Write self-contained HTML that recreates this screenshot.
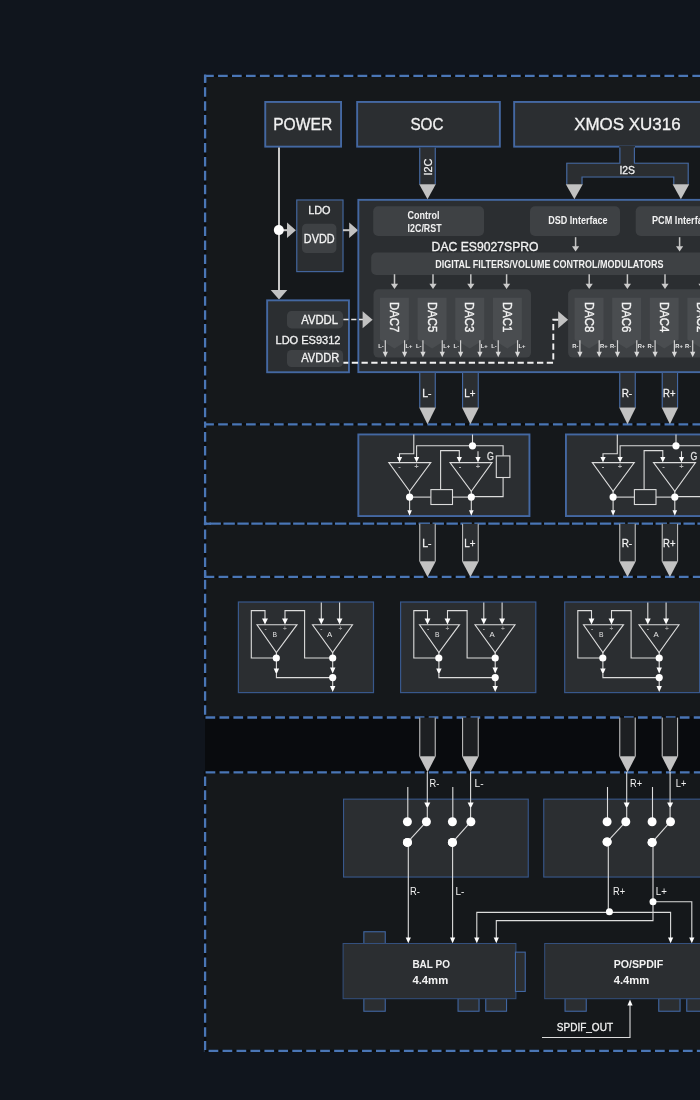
<!DOCTYPE html>
<html><head><meta charset="utf-8"><title>Block diagram</title>
<style>html,body{margin:0;padding:0;background:#10151d;}body{width:700px;height:1100px;overflow:hidden;}svg{display:block;will-change:transform;font-family:"Liberation Sans",sans-serif;}</style>
</head><body>
<svg width="700" height="1100" viewBox="0 0 700 1100">
<rect x="0" y="0" width="700" height="1100" fill="#10151d"/>
<rect x="205" y="75.5" width="495" height="976" fill="#15181b"/>
<rect x="205" y="717.5" width="495" height="55" fill="#090b0e"/>
<line x1="203.9" y1="75.9" x2="700" y2="75.9" stroke="#0b0d0f" stroke-width="2.4"/>
<line x1="203.9" y1="424.3" x2="700" y2="424.3" stroke="#0b0d0f" stroke-width="2.4"/>
<line x1="203.9" y1="523.7" x2="700" y2="523.7" stroke="#0b0d0f" stroke-width="2.4"/>
<line x1="203.9" y1="576.9" x2="700" y2="576.9" stroke="#0b0d0f" stroke-width="2.4"/>
<line x1="203.9" y1="717.5" x2="700" y2="717.5" stroke="#0b0d0f" stroke-width="2.4"/>
<line x1="203.9" y1="772.3" x2="700" y2="772.3" stroke="#0b0d0f" stroke-width="2.4"/>
<line x1="203.9" y1="1050.9" x2="700" y2="1050.9" stroke="#0b0d0f" stroke-width="2.4"/>
<line x1="205.1" y1="74.8" x2="205.1" y2="425.5" stroke="#0b0d0f" stroke-width="2.4"/>
<line x1="205.1" y1="424.3" x2="205.1" y2="578.1" stroke="#0b0d0f" stroke-width="2.4"/>
<line x1="205.1" y1="576.9" x2="205.1" y2="718.7" stroke="#0b0d0f" stroke-width="2.4"/>
<line x1="205.1" y1="772.3" x2="205.1" y2="1051.2" stroke="#0b0d0f" stroke-width="2.4"/>
<line x1="203.9" y1="75.9" x2="700" y2="75.9" stroke="#4a76b6" stroke-width="2.3" stroke-dasharray="9.7 4.25" stroke-dashoffset="13.75"/>
<line x1="203.9" y1="424.3" x2="700" y2="424.3" stroke="#4a76b6" stroke-width="2.3" stroke-dasharray="9.7 4.25" stroke-dashoffset="13.65"/>
<line x1="203.9" y1="523.7" x2="700" y2="523.7" stroke="#4a76b6" stroke-width="2.3" stroke-dasharray="11.4 2.54" stroke-dashoffset="8.35"/>
<line x1="203.9" y1="576.9" x2="700" y2="576.9" stroke="#4a76b6" stroke-width="2.3" stroke-dasharray="9.7 4.25" stroke-dashoffset="13.25"/>
<line x1="203.9" y1="717.5" x2="700" y2="717.5" stroke="#4a76b6" stroke-width="2.3" stroke-dasharray="9.7 4.25" stroke-dashoffset="12.35"/>
<line x1="203.9" y1="772.3" x2="700" y2="772.3" stroke="#4a76b6" stroke-width="2.3" stroke-dasharray="9.7 4.25" stroke-dashoffset="12.25"/>
<line x1="203.9" y1="1050.9" x2="700" y2="1050.9" stroke="#4a76b6" stroke-width="2.3" stroke-dasharray="9.7 4.25" stroke-dashoffset="9.25"/>
<line x1="205.1" y1="74.8" x2="205.1" y2="424.3" stroke="#4a76b6" stroke-width="2.3" stroke-dasharray="9.55 4.38" stroke-dashoffset="1.48"/>
<line x1="205.1" y1="424.3" x2="205.1" y2="576.9" stroke="#4a76b6" stroke-width="2.3" stroke-dasharray="9.55 4.38" stroke-dashoffset="6.13"/>
<line x1="205.1" y1="576.9" x2="205.1" y2="717.5" stroke="#4a76b6" stroke-width="2.3" stroke-dasharray="9.55 4.38" stroke-dashoffset="11.03"/>
<line x1="205.1" y1="772.3" x2="205.1" y2="1050" stroke="#4a76b6" stroke-width="2.3" stroke-dasharray="9.55 4.38" stroke-dashoffset="9.83"/>
<rect x="203.95" y="74.75" width="2.3" height="8" fill="#4a76b6"/>
<rect x="203.95" y="522.55" width="7" height="2.3" fill="#4a76b6"/>
<rect x="203.95" y="570" width="2.3" height="8" fill="#4a76b6"/>
<rect x="265.25" y="101.95" width="75.8" height="44.7" fill="#2b2e31" stroke="#4468a2" stroke-width="1.9"/>
<rect x="357.15" y="101.95" width="142.7" height="44.7" fill="#2b2e31" stroke="#4468a2" stroke-width="1.9"/>
<rect x="514.15" y="101.95" width="204.9" height="44.7" fill="#2b2e31" stroke="#4468a2" stroke-width="1.9"/>
<text x="302.7" y="129.6" font-size="16" text-anchor="middle" font-weight="normal" fill="#f2f2f2" textLength="59" lengthAdjust="spacingAndGlyphs" stroke="#f2f2f2" stroke-width="0.3">POWER</text>
<text x="426.9" y="129.6" font-size="16" text-anchor="middle" font-weight="normal" fill="#f2f2f2" textLength="33" lengthAdjust="spacingAndGlyphs" stroke="#f2f2f2" stroke-width="0.3">SOC</text>
<text x="627.4" y="129.6" font-size="16" text-anchor="middle" font-weight="normal" fill="#f2f2f2" textLength="106.5" lengthAdjust="spacingAndGlyphs" stroke="#f2f2f2" stroke-width="0.3">XMOS XU316</text>
<polyline points="279,147.6 279,291" fill="none" stroke="#c8c8c8" stroke-width="2"/>
<polygon points="270.7,290 287.3,290 279,299.6" fill="#c2c2c2"/>
<polyline points="279,230.2 288,230.2" fill="none" stroke="#c8c8c8" stroke-width="2"/>
<polygon points="287,222.4 287,238 295.9,230.2" fill="#c2c2c2"/>
<circle cx="278.8" cy="230.1" r="5" fill="#ffffff"/>
<rect x="296.77" y="199.97" width="46.25" height="71.65" fill="#2b2e31" stroke="#4468a2" stroke-width="1.15"/>
<text x="319.4" y="213.9" font-size="11.5" text-anchor="middle" font-weight="normal" fill="#f2f2f2" textLength="22.5" lengthAdjust="spacingAndGlyphs" stroke="#f2f2f2" stroke-width="0.3">LDO</text>
<rect x="302" y="223.7" width="34.4" height="29.3" fill="#3e4144" rx="4.5"/>
<text x="319.2" y="243.3" font-size="12" text-anchor="middle" font-weight="normal" fill="#f2f2f2" textLength="30.8" lengthAdjust="spacingAndGlyphs" stroke="#f2f2f2" stroke-width="0.3">DVDD</text>
<polyline points="343,230.2 350,230.2" fill="none" stroke="#c8c8c8" stroke-width="2"/>
<polygon points="349.2,222.4 349.2,238 358.1,230.2" fill="#c2c2c2"/>
<rect x="358.35" y="199.85" width="360.7" height="172.3" fill="#2b2e31" stroke="#4468a2" stroke-width="1.9"/>
<rect x="419.2" y="147.6" width="16.6" height="36.7" fill="#2b2e31"/>
<polyline points="419.75,147.6 419.75,184.3" fill="none" stroke="#4468a2" stroke-width="1.15"/>
<polyline points="435.25,147.6 435.25,184.3" fill="none" stroke="#4468a2" stroke-width="1.15"/>
<polygon points="419.2,184.3 435.8,184.3 427.5,199.2" fill="#c2c2c2"/>
<text transform="translate(432,175.6) rotate(-90)" font-size="11" fill="#f2f2f2" stroke="#f2f2f2" stroke-width="0.25" textLength="17" lengthAdjust="spacingAndGlyphs">I2C</text>
<path d="M619.3,146.1 V162.6 H566.2 V184.3 H582.6 V177.6 H673.2 V184.3 H688.8 V162.6 H635 V146.1 Z" fill="#2b2e31"/>
<path d="M619.9,147.6 V163.2 H566.8 V184.3 M582,184.3 V177 H673.8 V184.3 M688.2,184.3 V163.2 H634.4 V147.6" fill="none" stroke="#4468a2" stroke-width="1.15"/>
<polygon points="565.8,184.3 582.8,184.3 574.4,199.2" fill="#c2c2c2"/>
<polygon points="672.6,184.3 689.2,184.3 680.9,199.2" fill="#c2c2c2"/>
<text x="627.2" y="173.8" font-size="11.5" text-anchor="middle" font-weight="normal" fill="#f2f2f2" textLength="15.6" lengthAdjust="spacingAndGlyphs" stroke="#f2f2f2" stroke-width="0.3">I2S</text>
<rect x="373.2" y="206.3" width="110.8" height="29.7" fill="#3e4144" rx="5"/>
<rect x="530" y="206.3" width="90" height="29.7" fill="#3e4144" rx="5"/>
<rect x="635.7" y="206.3" width="84.3" height="29.7" fill="#3e4144" rx="5"/>
<text x="423.6" y="218.7" font-size="10.5" text-anchor="middle" font-weight="bold" fill="#f2f2f2" textLength="32" lengthAdjust="spacingAndGlyphs">Control</text>
<text x="424.6" y="232.3" font-size="10.5" text-anchor="middle" font-weight="bold" fill="#f2f2f2" textLength="34" lengthAdjust="spacingAndGlyphs">I2C/RST</text>
<text x="577.9" y="223.9" font-size="10.5" text-anchor="middle" font-weight="bold" fill="#f2f2f2" textLength="59.3" lengthAdjust="spacingAndGlyphs">DSD Interface</text>
<text x="652" y="223.9" font-size="10.5" text-anchor="start" font-weight="bold" fill="#f2f2f2" textLength="61" lengthAdjust="spacingAndGlyphs">PCM Interface</text>
<text x="431.6" y="250.5" font-size="12.6" text-anchor="start" font-weight="normal" fill="#f2f2f2" textLength="107" lengthAdjust="spacingAndGlyphs" stroke="#f2f2f2" stroke-width="0.3">DAC ES9027SPRO</text>
<rect x="371.2" y="252.5" width="348.8" height="22.5" fill="#3e4144" rx="5"/>
<text x="435.2" y="268.2" font-size="10.3" text-anchor="start" font-weight="bold" fill="#f2f2f2" textLength="228.3" lengthAdjust="spacingAndGlyphs">DIGITAL FILTERS/VOLUME CONTROL/MODULATORS</text>
<polyline points="575.6,237.2 575.6,246.8" fill="none" stroke="#c4c4c4" stroke-width="1.5"/>
<polygon points="572,246.3 579.2,246.3 575.6,251.5" fill="#cacaca"/>
<polyline points="679.6,237.2 679.6,246.8" fill="none" stroke="#c4c4c4" stroke-width="1.5"/>
<polygon points="676,246.3 683.2,246.3 679.6,251.5" fill="#cacaca"/>
<rect x="373.5" y="289.3" width="157.5" height="68.3" fill="#3e4144" rx="5"/>
<rect x="568.1" y="289.3" width="151.9" height="68.3" fill="#3e4144" rx="5"/>
<polyline points="394.5,274.2 394.5,284.3" fill="none" stroke="#c4c4c4" stroke-width="1.5"/>
<polygon points="390.9,283.8 398.1,283.8 394.5,289" fill="#cacaca"/>
<polygon points="380,297.7 408.9,297.7 408.9,339.4 394.45,348.5 380,339.4" fill="#4a4d50"/>
<text transform="translate(390.05,302) rotate(90)" font-size="13" fill="#f2f2f2" stroke="#f2f2f2" stroke-width="0.4" textLength="30.4" lengthAdjust="spacingAndGlyphs">DAC7</text>
<polyline points="385.3,340.2 385.3,352.3" fill="none" stroke="#d0d0d0" stroke-width="1.2"/>
<polygon points="382.7,351.8 387.9,351.8 385.3,357.2" fill="#d8d8d8"/>
<polyline points="404.6,340.2 404.6,352.3" fill="none" stroke="#d0d0d0" stroke-width="1.2"/>
<polygon points="402,351.8 407.2,351.8 404.6,357.2" fill="#d8d8d8"/>
<text x="383.8" y="348.2" font-size="5.8" text-anchor="end" font-weight="bold" fill="#e8e8e8">L-</text>
<text x="405.5" y="348.2" font-size="5.8" text-anchor="start" font-weight="bold" fill="#e8e8e8">L+</text>
<polyline points="433,274.2 433,284.3" fill="none" stroke="#c4c4c4" stroke-width="1.5"/>
<polygon points="429.4,283.8 436.6,283.8 433,289" fill="#cacaca"/>
<polygon points="417.65,297.7 446.55,297.7 446.55,339.4 432.1,348.5 417.65,339.4" fill="#4a4d50"/>
<text transform="translate(427.7,302) rotate(90)" font-size="13" fill="#f2f2f2" stroke="#f2f2f2" stroke-width="0.4" textLength="30.4" lengthAdjust="spacingAndGlyphs">DAC5</text>
<polyline points="422.95,340.2 422.95,352.3" fill="none" stroke="#d0d0d0" stroke-width="1.2"/>
<polygon points="420.35,351.8 425.55,351.8 422.95,357.2" fill="#d8d8d8"/>
<polyline points="442.25,340.2 442.25,352.3" fill="none" stroke="#d0d0d0" stroke-width="1.2"/>
<polygon points="439.65,351.8 444.85,351.8 442.25,357.2" fill="#d8d8d8"/>
<text x="421.45" y="348.2" font-size="5.8" text-anchor="end" font-weight="bold" fill="#e8e8e8">L-</text>
<text x="443.15" y="348.2" font-size="5.8" text-anchor="start" font-weight="bold" fill="#e8e8e8">L+</text>
<polyline points="470.8,274.2 470.8,284.3" fill="none" stroke="#c4c4c4" stroke-width="1.5"/>
<polygon points="467.2,283.8 474.4,283.8 470.8,289" fill="#cacaca"/>
<polygon points="455.3,297.7 484.2,297.7 484.2,339.4 469.75,348.5 455.3,339.4" fill="#4a4d50"/>
<text transform="translate(465.35,302) rotate(90)" font-size="13" fill="#f2f2f2" stroke="#f2f2f2" stroke-width="0.4" textLength="30.4" lengthAdjust="spacingAndGlyphs">DAC3</text>
<polyline points="460.6,340.2 460.6,352.3" fill="none" stroke="#d0d0d0" stroke-width="1.2"/>
<polygon points="458,351.8 463.2,351.8 460.6,357.2" fill="#d8d8d8"/>
<polyline points="479.9,340.2 479.9,352.3" fill="none" stroke="#d0d0d0" stroke-width="1.2"/>
<polygon points="477.3,351.8 482.5,351.8 479.9,357.2" fill="#d8d8d8"/>
<text x="459.1" y="348.2" font-size="5.8" text-anchor="end" font-weight="bold" fill="#e8e8e8">L-</text>
<text x="480.8" y="348.2" font-size="5.8" text-anchor="start" font-weight="bold" fill="#e8e8e8">L+</text>
<polyline points="506.6,274.2 506.6,284.3" fill="none" stroke="#c4c4c4" stroke-width="1.5"/>
<polygon points="503,283.8 510.2,283.8 506.6,289" fill="#cacaca"/>
<polygon points="492.95,297.7 521.85,297.7 521.85,339.4 507.4,348.5 492.95,339.4" fill="#4a4d50"/>
<text transform="translate(503,302) rotate(90)" font-size="13" fill="#f2f2f2" stroke="#f2f2f2" stroke-width="0.4" textLength="30.4" lengthAdjust="spacingAndGlyphs">DAC1</text>
<polyline points="498.25,340.2 498.25,352.3" fill="none" stroke="#d0d0d0" stroke-width="1.2"/>
<polygon points="495.65,351.8 500.85,351.8 498.25,357.2" fill="#d8d8d8"/>
<polyline points="517.55,340.2 517.55,352.3" fill="none" stroke="#d0d0d0" stroke-width="1.2"/>
<polygon points="514.95,351.8 520.15,351.8 517.55,357.2" fill="#d8d8d8"/>
<text x="496.75" y="348.2" font-size="5.8" text-anchor="end" font-weight="bold" fill="#e8e8e8">L-</text>
<text x="518.45" y="348.2" font-size="5.8" text-anchor="start" font-weight="bold" fill="#e8e8e8">L+</text>
<polyline points="589.2,274.2 589.2,284.3" fill="none" stroke="#c4c4c4" stroke-width="1.5"/>
<polygon points="585.6,283.8 592.8,283.8 589.2,289" fill="#cacaca"/>
<polygon points="574.6,297.7 603.5,297.7 603.5,339.4 589.05,348.5 574.6,339.4" fill="#4a4d50"/>
<text transform="translate(584.65,302) rotate(90)" font-size="13" fill="#f2f2f2" stroke="#f2f2f2" stroke-width="0.4" textLength="30.4" lengthAdjust="spacingAndGlyphs">DAC8</text>
<polyline points="579.9,340.2 579.9,352.3" fill="none" stroke="#d0d0d0" stroke-width="1.2"/>
<polygon points="577.3,351.8 582.5,351.8 579.9,357.2" fill="#d8d8d8"/>
<polyline points="599.2,340.2 599.2,352.3" fill="none" stroke="#d0d0d0" stroke-width="1.2"/>
<polygon points="596.6,351.8 601.8,351.8 599.2,357.2" fill="#d8d8d8"/>
<text x="578.4" y="348.2" font-size="5.8" text-anchor="end" font-weight="bold" fill="#e8e8e8">R-</text>
<text x="600.1" y="348.2" font-size="5.8" text-anchor="start" font-weight="bold" fill="#e8e8e8">R+</text>
<polyline points="627.4,274.2 627.4,284.3" fill="none" stroke="#c4c4c4" stroke-width="1.5"/>
<polygon points="623.8,283.8 631,283.8 627.4,289" fill="#cacaca"/>
<polygon points="612.2,297.7 641.1,297.7 641.1,339.4 626.65,348.5 612.2,339.4" fill="#4a4d50"/>
<text transform="translate(622.25,302) rotate(90)" font-size="13" fill="#f2f2f2" stroke="#f2f2f2" stroke-width="0.4" textLength="30.4" lengthAdjust="spacingAndGlyphs">DAC6</text>
<polyline points="617.5,340.2 617.5,352.3" fill="none" stroke="#d0d0d0" stroke-width="1.2"/>
<polygon points="614.9,351.8 620.1,351.8 617.5,357.2" fill="#d8d8d8"/>
<polyline points="636.8,340.2 636.8,352.3" fill="none" stroke="#d0d0d0" stroke-width="1.2"/>
<polygon points="634.2,351.8 639.4,351.8 636.8,357.2" fill="#d8d8d8"/>
<text x="616" y="348.2" font-size="5.8" text-anchor="end" font-weight="bold" fill="#e8e8e8">R-</text>
<text x="637.7" y="348.2" font-size="5.8" text-anchor="start" font-weight="bold" fill="#e8e8e8">R+</text>
<polyline points="665,274.2 665,284.3" fill="none" stroke="#c4c4c4" stroke-width="1.5"/>
<polygon points="661.4,283.8 668.6,283.8 665,289" fill="#cacaca"/>
<polygon points="649.8,297.7 678.7,297.7 678.7,339.4 664.25,348.5 649.8,339.4" fill="#4a4d50"/>
<text transform="translate(659.85,302) rotate(90)" font-size="13" fill="#f2f2f2" stroke="#f2f2f2" stroke-width="0.4" textLength="30.4" lengthAdjust="spacingAndGlyphs">DAC4</text>
<polyline points="655.1,340.2 655.1,352.3" fill="none" stroke="#d0d0d0" stroke-width="1.2"/>
<polygon points="652.5,351.8 657.7,351.8 655.1,357.2" fill="#d8d8d8"/>
<polyline points="674.4,340.2 674.4,352.3" fill="none" stroke="#d0d0d0" stroke-width="1.2"/>
<polygon points="671.8,351.8 677,351.8 674.4,357.2" fill="#d8d8d8"/>
<text x="653.6" y="348.2" font-size="5.8" text-anchor="end" font-weight="bold" fill="#e8e8e8">R-</text>
<text x="675.3" y="348.2" font-size="5.8" text-anchor="start" font-weight="bold" fill="#e8e8e8">R+</text>
<polyline points="702,274.2 702,284.3" fill="none" stroke="#c4c4c4" stroke-width="1.5"/>
<polygon points="698.4,283.8 705.6,283.8 702,289" fill="#cacaca"/>
<polygon points="687.4,297.7 716.3,297.7 716.3,339.4 701.85,348.5 687.4,339.4" fill="#4a4d50"/>
<text transform="translate(697.45,302) rotate(90)" font-size="13" fill="#f2f2f2" stroke="#f2f2f2" stroke-width="0.4" textLength="30.4" lengthAdjust="spacingAndGlyphs">DAC2</text>
<polyline points="692.7,340.2 692.7,352.3" fill="none" stroke="#d0d0d0" stroke-width="1.2"/>
<polygon points="690.1,351.8 695.3,351.8 692.7,357.2" fill="#d8d8d8"/>
<polyline points="712,340.2 712,352.3" fill="none" stroke="#d0d0d0" stroke-width="1.2"/>
<polygon points="709.4,351.8 714.6,351.8 712,357.2" fill="#d8d8d8"/>
<text x="691.2" y="348.2" font-size="5.8" text-anchor="end" font-weight="bold" fill="#e8e8e8">R-</text>
<text x="712.9" y="348.2" font-size="5.8" text-anchor="start" font-weight="bold" fill="#e8e8e8">R+</text>
<rect x="267.15" y="300.35" width="81.8" height="71.9" fill="#2b2e31" stroke="#4468a2" stroke-width="1.9"/>
<rect x="287" y="311.1" width="56.1" height="17.3" fill="#3e4144" rx="4.5"/>
<rect x="287" y="349.9" width="56.1" height="17.2" fill="#3e4144" rx="4.5"/>
<text x="301.2" y="323.9" font-size="12" text-anchor="start" font-weight="normal" fill="#f2f2f2" textLength="36.8" lengthAdjust="spacingAndGlyphs" stroke="#f2f2f2" stroke-width="0.3">AVDDL</text>
<text x="301.2" y="362.2" font-size="12" text-anchor="start" font-weight="normal" fill="#f2f2f2" textLength="38" lengthAdjust="spacingAndGlyphs" stroke="#f2f2f2" stroke-width="0.3">AVDDR</text>
<text x="275.5" y="343.9" font-size="11.3" text-anchor="start" font-weight="normal" fill="#f2f2f2" textLength="65" lengthAdjust="spacingAndGlyphs" stroke="#f2f2f2" stroke-width="0.3">LDO ES9312</text>
<polyline points="343.4,319.6 363,319.6" fill="none" stroke="#e6e6e6" stroke-width="1.5" stroke-dasharray="5.2 2.6"/>
<polygon points="362.6,311.2 362.6,328.3 372.6,319.8" fill="#c2c2c2"/>
<polyline points="343.4,362.8 553.3,362.8 553.3,319.8 558.6,319.8" fill="none" stroke="#f0f0f0" stroke-width="1.9" stroke-dasharray="6.3 3.45" stroke-dashoffset="1.4"/>
<polygon points="558.2,311.3 558.2,328.3 568.1,319.8" fill="#c2c2c2"/>
<rect x="419.2" y="372.9" width="16.6" height="34.7" fill="#2b2e31"/>
<polyline points="419.75,372.9 419.75,407.6" fill="none" stroke="#4468a2" stroke-width="1.15"/>
<polyline points="435.25,372.9 435.25,407.6" fill="none" stroke="#4468a2" stroke-width="1.15"/>
<polygon points="419.2,407.6 435.8,407.6 427.5,424.3" fill="#c2c2c2"/>
<text x="426.9" y="396.7" font-size="11.5" text-anchor="middle" font-weight="normal" fill="#f2f2f2" textLength="9.3" lengthAdjust="spacingAndGlyphs" stroke="#f2f2f2" stroke-width="0.3">L-</text>
<rect x="419.2" y="523.8" width="16.6" height="37.5" fill="#2b2e31"/>
<polyline points="419.75,523.8 419.75,561.3" fill="none" stroke="#b4b4b4" stroke-width="1.15"/>
<polyline points="435.25,523.8 435.25,561.3" fill="none" stroke="#b4b4b4" stroke-width="1.15"/>
<polygon points="419.2,561.3 435.8,561.3 427.5,577.1" fill="#c2c2c2"/>
<text x="426.9" y="546.5" font-size="11.5" text-anchor="middle" font-weight="normal" fill="#f2f2f2" textLength="9.3" lengthAdjust="spacingAndGlyphs" stroke="#f2f2f2" stroke-width="0.3">L-</text>
<rect x="419.2" y="717.6" width="16.6" height="38.7" fill="#1d1f22"/>
<polyline points="419.75,717.6 419.75,756.3" fill="none" stroke="#b4b4b4" stroke-width="1.15"/>
<polyline points="435.25,717.6 435.25,756.3" fill="none" stroke="#b4b4b4" stroke-width="1.15"/>
<polygon points="419.2,756.3 435.8,756.3 427.5,772.2" fill="#c2c2c2"/>
<rect x="462" y="372.9" width="16.8" height="34.7" fill="#2b2e31"/>
<polyline points="462.55,372.9 462.55,407.6" fill="none" stroke="#4468a2" stroke-width="1.15"/>
<polyline points="478.25,372.9 478.25,407.6" fill="none" stroke="#4468a2" stroke-width="1.15"/>
<polygon points="462,407.6 478.8,407.6 470.4,424.3" fill="#c2c2c2"/>
<text x="469.8" y="396.7" font-size="11.5" text-anchor="middle" font-weight="normal" fill="#f2f2f2" textLength="11.2" lengthAdjust="spacingAndGlyphs" stroke="#f2f2f2" stroke-width="0.3">L+</text>
<rect x="462" y="523.8" width="16.8" height="37.5" fill="#2b2e31"/>
<polyline points="462.55,523.8 462.55,561.3" fill="none" stroke="#b4b4b4" stroke-width="1.15"/>
<polyline points="478.25,523.8 478.25,561.3" fill="none" stroke="#b4b4b4" stroke-width="1.15"/>
<polygon points="462,561.3 478.8,561.3 470.4,577.1" fill="#c2c2c2"/>
<text x="469.8" y="546.5" font-size="11.5" text-anchor="middle" font-weight="normal" fill="#f2f2f2" textLength="11.2" lengthAdjust="spacingAndGlyphs" stroke="#f2f2f2" stroke-width="0.3">L+</text>
<rect x="462" y="717.6" width="16.8" height="38.7" fill="#1d1f22"/>
<polyline points="462.55,717.6 462.55,756.3" fill="none" stroke="#b4b4b4" stroke-width="1.15"/>
<polyline points="478.25,717.6 478.25,756.3" fill="none" stroke="#b4b4b4" stroke-width="1.15"/>
<polygon points="462,756.3 478.8,756.3 470.4,772.2" fill="#c2c2c2"/>
<rect x="619.2" y="372.9" width="16.6" height="34.7" fill="#2b2e31"/>
<polyline points="619.75,372.9 619.75,407.6" fill="none" stroke="#4468a2" stroke-width="1.15"/>
<polyline points="635.25,372.9 635.25,407.6" fill="none" stroke="#4468a2" stroke-width="1.15"/>
<polygon points="619.2,407.6 635.8,407.6 627.5,424.3" fill="#c2c2c2"/>
<text x="626.9" y="396.7" font-size="11.5" text-anchor="middle" font-weight="normal" fill="#f2f2f2" textLength="10.5" lengthAdjust="spacingAndGlyphs" stroke="#f2f2f2" stroke-width="0.3">R-</text>
<rect x="619.2" y="523.8" width="16.6" height="37.5" fill="#2b2e31"/>
<polyline points="619.75,523.8 619.75,561.3" fill="none" stroke="#b4b4b4" stroke-width="1.15"/>
<polyline points="635.25,523.8 635.25,561.3" fill="none" stroke="#b4b4b4" stroke-width="1.15"/>
<polygon points="619.2,561.3 635.8,561.3 627.5,577.1" fill="#c2c2c2"/>
<text x="626.9" y="546.5" font-size="11.5" text-anchor="middle" font-weight="normal" fill="#f2f2f2" textLength="10.5" lengthAdjust="spacingAndGlyphs" stroke="#f2f2f2" stroke-width="0.3">R-</text>
<rect x="619.2" y="717.6" width="16.6" height="38.7" fill="#1d1f22"/>
<polyline points="619.75,717.6 619.75,756.3" fill="none" stroke="#b4b4b4" stroke-width="1.15"/>
<polyline points="635.25,717.6 635.25,756.3" fill="none" stroke="#b4b4b4" stroke-width="1.15"/>
<polygon points="619.2,756.3 635.8,756.3 627.5,772.2" fill="#c2c2c2"/>
<rect x="661.7" y="372.9" width="16.4" height="34.7" fill="#2b2e31"/>
<polyline points="662.25,372.9 662.25,407.6" fill="none" stroke="#4468a2" stroke-width="1.15"/>
<polyline points="677.55,372.9 677.55,407.6" fill="none" stroke="#4468a2" stroke-width="1.15"/>
<polygon points="661.7,407.6 678.1,407.6 669.9,424.3" fill="#c2c2c2"/>
<text x="669.3" y="396.7" font-size="11.5" text-anchor="middle" font-weight="normal" fill="#f2f2f2" textLength="12.4" lengthAdjust="spacingAndGlyphs" stroke="#f2f2f2" stroke-width="0.3">R+</text>
<rect x="661.7" y="523.8" width="16.4" height="37.5" fill="#2b2e31"/>
<polyline points="662.25,523.8 662.25,561.3" fill="none" stroke="#b4b4b4" stroke-width="1.15"/>
<polyline points="677.55,523.8 677.55,561.3" fill="none" stroke="#b4b4b4" stroke-width="1.15"/>
<polygon points="661.7,561.3 678.1,561.3 669.9,577.1" fill="#c2c2c2"/>
<text x="669.3" y="546.5" font-size="11.5" text-anchor="middle" font-weight="normal" fill="#f2f2f2" textLength="12.4" lengthAdjust="spacingAndGlyphs" stroke="#f2f2f2" stroke-width="0.3">R+</text>
<rect x="661.7" y="717.6" width="16.4" height="38.7" fill="#1d1f22"/>
<polyline points="662.25,717.6 662.25,756.3" fill="none" stroke="#b4b4b4" stroke-width="1.15"/>
<polyline points="677.55,717.6 677.55,756.3" fill="none" stroke="#b4b4b4" stroke-width="1.15"/>
<polygon points="661.7,756.3 678.1,756.3 669.9,772.2" fill="#c2c2c2"/>
<rect x="358.35" y="434.45" width="171.1" height="81.6" fill="#2b2e31" stroke="#4468a2" stroke-width="1.9"/>
<rect x="565.95" y="434.45" width="153.1" height="81.6" fill="#2b2e31" stroke="#4468a2" stroke-width="1.9"/>
<polyline points="413.8,434.5 413.8,453.8 399.5,453.8 399.5,458" fill="none" stroke="#dcdcdc" stroke-width="1.1"/>
<polygon points="396.9,457 402.1,457 399.5,462.5" fill="#ffffff"/>
<polyline points="472.5,434.5 472.5,445.8" fill="none" stroke="#dcdcdc" stroke-width="1.1"/>
<polyline points="472.5,445.8 416.6,445.8 416.6,458" fill="none" stroke="#dcdcdc" stroke-width="1.1"/>
<polygon points="414,457 419.2,457 416.6,462.5" fill="#ffffff"/>
<polyline points="472.5,445.8 503.1,445.8 503.1,455.8" fill="none" stroke="#dcdcdc" stroke-width="1.1"/>
<polyline points="503.1,477.5 503.1,496.6 471.3,496.6" fill="none" stroke="#dcdcdc" stroke-width="1.1"/>
<rect x="496.3" y="455.9" width="13.6" height="21.6" fill="#2b2e31" stroke="#dcdcdc" stroke-width="1.1"/>
<polygon points="388.8,462.6 430.8,462.6 409.6,491.3" fill="none" stroke="#dcdcdc" stroke-width="1.1" stroke-linejoin="miter"/>
<polygon points="450,462.6 492,462.6 471.3,491.3" fill="none" stroke="#dcdcdc" stroke-width="1.1" stroke-linejoin="miter"/>
<polyline points="440.6,489.5 440.6,450.6 459.3,450.6 459.3,458" fill="none" stroke="#dcdcdc" stroke-width="1.1"/>
<polygon points="456.7,457 461.9,457 459.3,462.5" fill="#ffffff"/>
<polyline points="478,451.3 478,458" fill="none" stroke="#dcdcdc" stroke-width="1.1"/>
<polygon points="475.4,457 480.6,457 478,462.5" fill="#ffffff"/>
<polyline points="409.6,491 409.6,497" fill="none" stroke="#dcdcdc" stroke-width="1.1"/>
<polyline points="471.3,491 471.3,497" fill="none" stroke="#dcdcdc" stroke-width="1.1"/>
<polyline points="409.6,497.1 430.8,497.1" fill="none" stroke="#dcdcdc" stroke-width="1.1"/>
<polyline points="452.5,497.1 471.3,497.1" fill="none" stroke="#dcdcdc" stroke-width="1.1"/>
<rect x="430.9" y="489.6" width="21.6" height="14.9" fill="#2b2e31" stroke="#dcdcdc" stroke-width="1.1"/>
<polyline points="409.6,497 409.6,510.8" fill="none" stroke="#dcdcdc" stroke-width="1.1"/>
<polygon points="407.3,510.3 411.9,510.3 409.6,515.7" fill="#ffffff"/>
<polyline points="471.3,497 471.3,510.8" fill="none" stroke="#dcdcdc" stroke-width="1.1"/>
<polygon points="469,510.3 473.6,510.3 471.3,515.7" fill="#ffffff"/>
<circle cx="472.5" cy="445.8" r="3.6" fill="#ffffff"/>
<circle cx="409.6" cy="497.1" r="3.6" fill="#ffffff"/>
<circle cx="471.3" cy="497.1" r="3.6" fill="#ffffff"/>
<text x="487" y="459.6" font-size="10.5" text-anchor="start" font-weight="normal" fill="#e0e0e0" textLength="6.8" lengthAdjust="spacingAndGlyphs" stroke="#e0e0e0" stroke-width="0.3">G</text>
<text x="399.5" y="469" font-size="7.6" text-anchor="middle" font-weight="bold" fill="#b4b4b4">-</text>
<text x="416.4" y="469" font-size="7.6" text-anchor="middle" font-weight="bold" fill="#b4b4b4">+</text>
<text x="460" y="469" font-size="7.6" text-anchor="middle" font-weight="bold" fill="#b4b4b4">-</text>
<text x="478" y="469" font-size="7.6" text-anchor="middle" font-weight="bold" fill="#b4b4b4">+</text>
<polyline points="617.3,434.5 617.3,453.8 603,453.8 603,458" fill="none" stroke="#dcdcdc" stroke-width="1.1"/>
<polygon points="600.4,457 605.6,457 603,462.5" fill="#ffffff"/>
<polyline points="676,434.5 676,445.8" fill="none" stroke="#dcdcdc" stroke-width="1.1"/>
<polyline points="676,445.8 620.1,445.8 620.1,458" fill="none" stroke="#dcdcdc" stroke-width="1.1"/>
<polygon points="617.5,457 622.7,457 620.1,462.5" fill="#ffffff"/>
<polyline points="676,445.8 706.6,445.8 706.6,455.8" fill="none" stroke="#dcdcdc" stroke-width="1.1"/>
<polyline points="706.6,477.5 706.6,496.6 674.8,496.6" fill="none" stroke="#dcdcdc" stroke-width="1.1"/>
<polygon points="592.3,462.6 634.3,462.6 613.1,491.3" fill="none" stroke="#dcdcdc" stroke-width="1.1" stroke-linejoin="miter"/>
<polygon points="653.5,462.6 695.5,462.6 674.8,491.3" fill="none" stroke="#dcdcdc" stroke-width="1.1" stroke-linejoin="miter"/>
<polyline points="644.1,489.5 644.1,450.6 662.8,450.6 662.8,458" fill="none" stroke="#dcdcdc" stroke-width="1.1"/>
<polygon points="660.2,457 665.4,457 662.8,462.5" fill="#ffffff"/>
<polyline points="681.5,451.3 681.5,458" fill="none" stroke="#dcdcdc" stroke-width="1.1"/>
<polygon points="678.9,457 684.1,457 681.5,462.5" fill="#ffffff"/>
<polyline points="613.1,491 613.1,497" fill="none" stroke="#dcdcdc" stroke-width="1.1"/>
<polyline points="674.8,491 674.8,497" fill="none" stroke="#dcdcdc" stroke-width="1.1"/>
<polyline points="613.1,497.1 634.3,497.1" fill="none" stroke="#dcdcdc" stroke-width="1.1"/>
<polyline points="656,497.1 674.8,497.1" fill="none" stroke="#dcdcdc" stroke-width="1.1"/>
<rect x="634.4" y="489.6" width="21.6" height="14.9" fill="#2b2e31" stroke="#dcdcdc" stroke-width="1.1"/>
<polyline points="613.1,497 613.1,510.8" fill="none" stroke="#dcdcdc" stroke-width="1.1"/>
<polygon points="610.8,510.3 615.4,510.3 613.1,515.7" fill="#ffffff"/>
<polyline points="674.8,497 674.8,510.8" fill="none" stroke="#dcdcdc" stroke-width="1.1"/>
<polygon points="672.5,510.3 677.1,510.3 674.8,515.7" fill="#ffffff"/>
<circle cx="676" cy="445.8" r="3.6" fill="#ffffff"/>
<circle cx="613.1" cy="497.1" r="3.6" fill="#ffffff"/>
<circle cx="674.8" cy="497.1" r="3.6" fill="#ffffff"/>
<text x="690.5" y="459.6" font-size="10.5" text-anchor="start" font-weight="normal" fill="#e0e0e0" textLength="6.8" lengthAdjust="spacingAndGlyphs" stroke="#e0e0e0" stroke-width="0.3">G</text>
<text x="603" y="469" font-size="7.6" text-anchor="middle" font-weight="bold" fill="#b4b4b4">-</text>
<text x="619.9" y="469" font-size="7.6" text-anchor="middle" font-weight="bold" fill="#b4b4b4">+</text>
<text x="663.5" y="469" font-size="7.6" text-anchor="middle" font-weight="bold" fill="#b4b4b4">-</text>
<text x="681.5" y="469" font-size="7.6" text-anchor="middle" font-weight="bold" fill="#b4b4b4">+</text>
<rect x="238.4" y="602" width="135.1" height="90.6" fill="#2b2e31" stroke="#38588c" stroke-width="1.2"/>
<polyline points="276.3,658 251.3,658 251.3,610.6 265,610.6 265,620" fill="none" stroke="#dcdcdc" stroke-width="1.1"/>
<polygon points="262.1,618.4 267.9,618.4 265,624.6" fill="#ffffff"/>
<polyline points="332.7,658 304.6,658 304.6,610.6 285,610.6 285,620" fill="none" stroke="#dcdcdc" stroke-width="1.1"/>
<polygon points="282.1,618.4 287.9,618.4 285,624.6" fill="#ffffff"/>
<polyline points="321.3,602.4 321.3,618.9" fill="none" stroke="#dcdcdc" stroke-width="1.1"/>
<polygon points="318.4,618.4 324.2,618.4 321.3,624.6" fill="#ffffff"/>
<polyline points="339.6,602.4 339.6,618.9" fill="none" stroke="#dcdcdc" stroke-width="1.1"/>
<polygon points="336.7,618.4 342.5,618.4 339.6,624.6" fill="#ffffff"/>
<polygon points="257,624.7 297,624.7 276.4,652.6" fill="none" stroke="#dcdcdc" stroke-width="1.1" stroke-linejoin="miter"/>
<polygon points="312.5,624.7 352.5,624.7 332.6,652.6" fill="none" stroke="#dcdcdc" stroke-width="1.1" stroke-linejoin="miter"/>
<polyline points="276.4,652 276.4,658" fill="none" stroke="#dcdcdc" stroke-width="1.1"/>
<polyline points="332.7,652 332.7,658" fill="none" stroke="#dcdcdc" stroke-width="1.1"/>
<polyline points="276.4,658 276.4,668.9" fill="none" stroke="#dcdcdc" stroke-width="1.1"/>
<polygon points="273.7,668.4 279.1,668.4 276.4,674.4" fill="#ffffff"/>
<polyline points="276.4,674 276.4,677.6 332.7,677.6" fill="none" stroke="#dcdcdc" stroke-width="1.1"/>
<polyline points="332.7,658 332.7,668.1" fill="none" stroke="#dcdcdc" stroke-width="1.1"/>
<polygon points="330,667.6 335.4,667.6 332.7,673.6" fill="#ffffff"/>
<polyline points="332.7,677.5 332.7,686.5" fill="none" stroke="#dcdcdc" stroke-width="1.1"/>
<polygon points="330,686 335.4,686 332.7,692" fill="#ffffff"/>
<circle cx="276.3" cy="658" r="3.6" fill="#ffffff"/>
<circle cx="332.7" cy="658" r="3.6" fill="#ffffff"/>
<circle cx="332.7" cy="677.6" r="3.6" fill="#ffffff"/>
<text x="274.8" y="637.1" font-size="8" text-anchor="middle" font-weight="normal" fill="#e4e4e4" textLength="4.5" lengthAdjust="spacingAndGlyphs">B</text>
<text x="329.7" y="637.1" font-size="8" text-anchor="middle" font-weight="normal" fill="#e4e4e4" textLength="5.2" lengthAdjust="spacingAndGlyphs">A</text>
<text x="265.5" y="630.9" font-size="6.5" text-anchor="middle" font-weight="bold" fill="#9a9a9a">-</text>
<text x="285" y="630.9" font-size="6.5" text-anchor="middle" font-weight="bold" fill="#9a9a9a">+</text>
<text x="321.3" y="630.9" font-size="6.5" text-anchor="middle" font-weight="bold" fill="#9a9a9a">-</text>
<text x="340.5" y="630.9" font-size="6.5" text-anchor="middle" font-weight="bold" fill="#9a9a9a">+</text>
<rect x="400.6" y="602" width="135.2" height="90.6" fill="#2b2e31" stroke="#38588c" stroke-width="1.2"/>
<polyline points="438.8,658 413.8,658 413.8,610.6 427.5,610.6 427.5,620" fill="none" stroke="#dcdcdc" stroke-width="1.1"/>
<polygon points="424.6,618.4 430.4,618.4 427.5,624.6" fill="#ffffff"/>
<polyline points="495.2,658 467.1,658 467.1,610.6 447.5,610.6 447.5,620" fill="none" stroke="#dcdcdc" stroke-width="1.1"/>
<polygon points="444.6,618.4 450.4,618.4 447.5,624.6" fill="#ffffff"/>
<polyline points="483.8,602.4 483.8,618.9" fill="none" stroke="#dcdcdc" stroke-width="1.1"/>
<polygon points="480.9,618.4 486.7,618.4 483.8,624.6" fill="#ffffff"/>
<polyline points="502.1,602.4 502.1,618.9" fill="none" stroke="#dcdcdc" stroke-width="1.1"/>
<polygon points="499.2,618.4 505,618.4 502.1,624.6" fill="#ffffff"/>
<polygon points="419.5,624.7 459.5,624.7 438.9,652.6" fill="none" stroke="#dcdcdc" stroke-width="1.1" stroke-linejoin="miter"/>
<polygon points="475,624.7 515,624.7 495.1,652.6" fill="none" stroke="#dcdcdc" stroke-width="1.1" stroke-linejoin="miter"/>
<polyline points="438.9,652 438.9,658" fill="none" stroke="#dcdcdc" stroke-width="1.1"/>
<polyline points="495.2,652 495.2,658" fill="none" stroke="#dcdcdc" stroke-width="1.1"/>
<polyline points="438.9,658 438.9,668.9" fill="none" stroke="#dcdcdc" stroke-width="1.1"/>
<polygon points="436.2,668.4 441.6,668.4 438.9,674.4" fill="#ffffff"/>
<polyline points="438.9,674 438.9,677.6 495.2,677.6" fill="none" stroke="#dcdcdc" stroke-width="1.1"/>
<polyline points="495.2,658 495.2,668.1" fill="none" stroke="#dcdcdc" stroke-width="1.1"/>
<polygon points="492.5,667.6 497.9,667.6 495.2,673.6" fill="#ffffff"/>
<polyline points="495.2,677.5 495.2,686.5" fill="none" stroke="#dcdcdc" stroke-width="1.1"/>
<polygon points="492.5,686 497.9,686 495.2,692" fill="#ffffff"/>
<circle cx="438.8" cy="658" r="3.6" fill="#ffffff"/>
<circle cx="495.2" cy="658" r="3.6" fill="#ffffff"/>
<circle cx="495.2" cy="677.6" r="3.6" fill="#ffffff"/>
<text x="437.3" y="637.1" font-size="8" text-anchor="middle" font-weight="normal" fill="#e4e4e4" textLength="4.5" lengthAdjust="spacingAndGlyphs">B</text>
<text x="492.2" y="637.1" font-size="8" text-anchor="middle" font-weight="normal" fill="#e4e4e4" textLength="5.2" lengthAdjust="spacingAndGlyphs">A</text>
<text x="428" y="630.9" font-size="6.5" text-anchor="middle" font-weight="bold" fill="#9a9a9a">-</text>
<text x="447.5" y="630.9" font-size="6.5" text-anchor="middle" font-weight="bold" fill="#9a9a9a">+</text>
<text x="483.8" y="630.9" font-size="6.5" text-anchor="middle" font-weight="bold" fill="#9a9a9a">-</text>
<text x="503" y="630.9" font-size="6.5" text-anchor="middle" font-weight="bold" fill="#9a9a9a">+</text>
<rect x="564.7" y="602" width="134.9" height="90.6" fill="#2b2e31" stroke="#38588c" stroke-width="1.2"/>
<polyline points="602.8,658 577.8,658 577.8,610.6 591.5,610.6 591.5,620" fill="none" stroke="#dcdcdc" stroke-width="1.1"/>
<polygon points="588.6,618.4 594.4,618.4 591.5,624.6" fill="#ffffff"/>
<polyline points="659.2,658 631.1,658 631.1,610.6 611.5,610.6 611.5,620" fill="none" stroke="#dcdcdc" stroke-width="1.1"/>
<polygon points="608.6,618.4 614.4,618.4 611.5,624.6" fill="#ffffff"/>
<polyline points="647.8,602.4 647.8,618.9" fill="none" stroke="#dcdcdc" stroke-width="1.1"/>
<polygon points="644.9,618.4 650.7,618.4 647.8,624.6" fill="#ffffff"/>
<polyline points="666.1,602.4 666.1,618.9" fill="none" stroke="#dcdcdc" stroke-width="1.1"/>
<polygon points="663.2,618.4 669,618.4 666.1,624.6" fill="#ffffff"/>
<polygon points="583.5,624.7 623.5,624.7 602.9,652.6" fill="none" stroke="#dcdcdc" stroke-width="1.1" stroke-linejoin="miter"/>
<polygon points="639,624.7 679,624.7 659.1,652.6" fill="none" stroke="#dcdcdc" stroke-width="1.1" stroke-linejoin="miter"/>
<polyline points="602.9,652 602.9,658" fill="none" stroke="#dcdcdc" stroke-width="1.1"/>
<polyline points="659.2,652 659.2,658" fill="none" stroke="#dcdcdc" stroke-width="1.1"/>
<polyline points="602.9,658 602.9,668.9" fill="none" stroke="#dcdcdc" stroke-width="1.1"/>
<polygon points="600.2,668.4 605.6,668.4 602.9,674.4" fill="#ffffff"/>
<polyline points="602.9,674 602.9,677.6 659.2,677.6" fill="none" stroke="#dcdcdc" stroke-width="1.1"/>
<polyline points="659.2,658 659.2,668.1" fill="none" stroke="#dcdcdc" stroke-width="1.1"/>
<polygon points="656.5,667.6 661.9,667.6 659.2,673.6" fill="#ffffff"/>
<polyline points="659.2,677.5 659.2,686.5" fill="none" stroke="#dcdcdc" stroke-width="1.1"/>
<polygon points="656.5,686 661.9,686 659.2,692" fill="#ffffff"/>
<circle cx="602.8" cy="658" r="3.6" fill="#ffffff"/>
<circle cx="659.2" cy="658" r="3.6" fill="#ffffff"/>
<circle cx="659.2" cy="677.6" r="3.6" fill="#ffffff"/>
<text x="601.3" y="637.1" font-size="8" text-anchor="middle" font-weight="normal" fill="#e4e4e4" textLength="4.5" lengthAdjust="spacingAndGlyphs">B</text>
<text x="656.2" y="637.1" font-size="8" text-anchor="middle" font-weight="normal" fill="#e4e4e4" textLength="5.2" lengthAdjust="spacingAndGlyphs">A</text>
<text x="592" y="630.9" font-size="6.5" text-anchor="middle" font-weight="bold" fill="#9a9a9a">-</text>
<text x="611.5" y="630.9" font-size="6.5" text-anchor="middle" font-weight="bold" fill="#9a9a9a">+</text>
<text x="647.8" y="630.9" font-size="6.5" text-anchor="middle" font-weight="bold" fill="#9a9a9a">-</text>
<text x="667" y="630.9" font-size="6.5" text-anchor="middle" font-weight="bold" fill="#9a9a9a">+</text>
<rect x="343.55" y="799.15" width="184.7" height="77.9" fill="#2b2e31" stroke="#38588c" stroke-width="1.1"/>
<rect x="543.75" y="799.15" width="175.7" height="77.9" fill="#2b2e31" stroke="#38588c" stroke-width="1.1"/>
<polyline points="407.8,787 407.8,821.7" fill="none" stroke="#dcdcdc" stroke-width="1.1"/>
<polyline points="427.3,772 427.3,803.4" fill="none" stroke="#dcdcdc" stroke-width="1.1"/>
<polygon points="424.3,802.6 430.3,802.6 427.3,808.5" fill="#ffffff"/>
<polyline points="427.3,808 427.3,821.7" fill="none" stroke="#dcdcdc" stroke-width="1.1"/>
<polyline points="407.4,842.4 426.4,821.7" fill="none" stroke="#dcdcdc" stroke-width="1.1"/>
<circle cx="407.4" cy="821.7" r="4.5" fill="#ffffff"/>
<circle cx="426.4" cy="821.7" r="4.5" fill="#ffffff"/>
<circle cx="407.4" cy="842.4" r="4.5" fill="#ffffff"/>
<polyline points="452.8,787 452.8,821.7" fill="none" stroke="#dcdcdc" stroke-width="1.1"/>
<polyline points="470.6,772 470.6,803.4" fill="none" stroke="#dcdcdc" stroke-width="1.1"/>
<polygon points="467.6,802.6 473.6,802.6 470.6,808.5" fill="#ffffff"/>
<polyline points="470.6,808 470.6,821.7" fill="none" stroke="#dcdcdc" stroke-width="1.1"/>
<polyline points="452.4,842.4 470.9,821.7" fill="none" stroke="#dcdcdc" stroke-width="1.1"/>
<circle cx="452.4" cy="821.7" r="4.5" fill="#ffffff"/>
<circle cx="470.9" cy="821.7" r="4.5" fill="#ffffff"/>
<circle cx="452.4" cy="842.4" r="4.5" fill="#ffffff"/>
<polyline points="607.5,787 607.5,821.7" fill="none" stroke="#dcdcdc" stroke-width="1.1"/>
<polyline points="626.7,772 626.7,803.4" fill="none" stroke="#dcdcdc" stroke-width="1.1"/>
<polygon points="623.7,802.6 629.7,802.6 626.7,808.5" fill="#ffffff"/>
<polyline points="626.7,808 626.7,821.7" fill="none" stroke="#dcdcdc" stroke-width="1.1"/>
<polyline points="607.1,841.9 625.8,821.7" fill="none" stroke="#dcdcdc" stroke-width="1.1"/>
<circle cx="607.1" cy="821.7" r="4.5" fill="#ffffff"/>
<circle cx="625.8" cy="821.7" r="4.5" fill="#ffffff"/>
<circle cx="607.1" cy="841.9" r="4.5" fill="#ffffff"/>
<polyline points="652.5,787 652.5,821.7" fill="none" stroke="#dcdcdc" stroke-width="1.1"/>
<polyline points="670.1,772 670.1,803.4" fill="none" stroke="#dcdcdc" stroke-width="1.1"/>
<polygon points="667.1,802.6 673.1,802.6 670.1,808.5" fill="#ffffff"/>
<polyline points="670.1,808 670.1,821.7" fill="none" stroke="#dcdcdc" stroke-width="1.1"/>
<polyline points="652.1,842.4 670.5,821.7" fill="none" stroke="#dcdcdc" stroke-width="1.1"/>
<circle cx="652.1" cy="821.7" r="4.5" fill="#ffffff"/>
<circle cx="670.5" cy="821.7" r="4.5" fill="#ffffff"/>
<circle cx="652.1" cy="842.4" r="4.5" fill="#ffffff"/>
<text x="429.6" y="786.8" font-size="10.3" text-anchor="start" font-weight="normal" fill="#f2f2f2" textLength="9.8" lengthAdjust="spacingAndGlyphs">R-</text>
<text x="474.6" y="786.8" font-size="10.3" text-anchor="start" font-weight="normal" fill="#f2f2f2" textLength="9" lengthAdjust="spacingAndGlyphs">L-</text>
<text x="630" y="786.8" font-size="10.3" text-anchor="start" font-weight="normal" fill="#f2f2f2" textLength="12" lengthAdjust="spacingAndGlyphs">R+</text>
<text x="675.8" y="786.8" font-size="10.3" text-anchor="start" font-weight="normal" fill="#f2f2f2" textLength="10.6" lengthAdjust="spacingAndGlyphs">L+</text>
<rect x="363.85" y="931.75" width="21.4" height="12.2" fill="#2b2e31" stroke="#4066a2" stroke-width="1.1"/>
<rect x="363.85" y="998.55" width="21.4" height="12.7" fill="#2b2e31" stroke="#4066a2" stroke-width="1.1"/>
<rect x="458.05" y="998.55" width="21" height="12.7" fill="#2b2e31" stroke="#4066a2" stroke-width="1.1"/>
<rect x="485.75" y="998.55" width="20.8" height="12.7" fill="#2b2e31" stroke="#4066a2" stroke-width="1.1"/>
<rect x="565.05" y="998.55" width="21.2" height="12.7" fill="#2b2e31" stroke="#4066a2" stroke-width="1.1"/>
<rect x="658.75" y="998.55" width="21.3" height="12.7" fill="#2b2e31" stroke="#4066a2" stroke-width="1.1"/>
<rect x="686.75" y="998.55" width="32.7" height="12.7" fill="#2b2e31" stroke="#4066a2" stroke-width="1.1"/>
<rect x="343.1" y="943.5" width="172.8" height="55.2" fill="#2b2e31" stroke="#34507e" stroke-width="1"/>
<rect x="544.7" y="943.5" width="174.8" height="55.2" fill="#2b2e31" stroke="#34507e" stroke-width="1"/>
<rect x="515.45" y="952.15" width="9.8" height="39.3" fill="#2b2e31" stroke="#4066a2" stroke-width="1.1"/>
<polyline points="408.3,842.4 408.3,938.1" fill="none" stroke="#dcdcdc" stroke-width="1.1"/>
<polygon points="405.7,937.6 410.9,937.6 408.3,943.2" fill="#ffffff"/>
<polyline points="452.6,842.4 452.6,938.1" fill="none" stroke="#dcdcdc" stroke-width="1.1"/>
<polygon points="450,937.6 455.2,937.6 452.6,943.2" fill="#ffffff"/>
<polyline points="608.3,841.9 608.3,911.8" fill="none" stroke="#dcdcdc" stroke-width="1.1"/>
<polyline points="609.5,912.4 476.8,912.4 476.8,938" fill="none" stroke="#dcdcdc" stroke-width="1.1"/>
<polygon points="474.2,937.6 479.4,937.6 476.8,943.2" fill="#ffffff"/>
<polyline points="609.5,912.4 670.6,912.4 670.6,938" fill="none" stroke="#dcdcdc" stroke-width="1.1"/>
<polygon points="668,937.6 673.2,937.6 670.6,943.2" fill="#ffffff"/>
<polyline points="653,842.4 653,920.6 496.3,920.6 496.3,938" fill="none" stroke="#dcdcdc" stroke-width="1.1"/>
<polygon points="493.7,937.6 498.9,937.6 496.3,943.2" fill="#ffffff"/>
<polyline points="653,901.8 691.8,901.8 691.8,938" fill="none" stroke="#dcdcdc" stroke-width="1.1"/>
<polygon points="689.2,937.6 694.4,937.6 691.8,943.2" fill="#ffffff"/>
<circle cx="609.4" cy="911.8" r="3.5" fill="#ffffff"/>
<circle cx="653" cy="901.8" r="3.5" fill="#ffffff"/>
<circle cx="407.5" cy="842.4" r="4.5" fill="#ffffff"/>
<circle cx="452.4" cy="842.4" r="4.5" fill="#ffffff"/>
<circle cx="607.1" cy="841.9" r="4.5" fill="#ffffff"/>
<circle cx="652.1" cy="842.4" r="4.5" fill="#ffffff"/>
<text x="410" y="894.6" font-size="10" text-anchor="start" font-weight="normal" fill="#f2f2f2" textLength="9.8" lengthAdjust="spacingAndGlyphs">R-</text>
<text x="455.6" y="894.6" font-size="10" text-anchor="start" font-weight="normal" fill="#f2f2f2" textLength="8.8" lengthAdjust="spacingAndGlyphs">L-</text>
<text x="613" y="894.6" font-size="10" text-anchor="start" font-weight="normal" fill="#f2f2f2" textLength="12" lengthAdjust="spacingAndGlyphs">R+</text>
<text x="655.8" y="894.6" font-size="10" text-anchor="start" font-weight="normal" fill="#f2f2f2" textLength="11" lengthAdjust="spacingAndGlyphs">L+</text>
<text x="412.4" y="968.1" font-size="10.4" text-anchor="start" font-weight="bold" fill="#f2f2f2" textLength="37.6" lengthAdjust="spacingAndGlyphs">BAL PO</text>
<text x="412.4" y="983.8" font-size="10.4" text-anchor="start" font-weight="bold" fill="#f2f2f2" textLength="35.8" lengthAdjust="spacingAndGlyphs">4.4mm</text>
<text x="613.7" y="968.1" font-size="10.4" text-anchor="start" font-weight="bold" fill="#f2f2f2" textLength="49.6" lengthAdjust="spacingAndGlyphs">PO/SPDIF</text>
<text x="613.7" y="983.8" font-size="10.4" text-anchor="start" font-weight="bold" fill="#f2f2f2" textLength="35.6" lengthAdjust="spacingAndGlyphs">4.4mm</text>
<polyline points="542,1037.5 630,1037.5 630,1004.5" fill="none" stroke="#dcdcdc" stroke-width="1.1"/>
<polygon points="627.4,1005.4 632.6,1005.4 630,999.6" fill="#ffffff"/>
<text x="556.8" y="1031.3" font-size="10.4" text-anchor="start" font-weight="normal" fill="#f2f2f2" textLength="56.2" lengthAdjust="spacingAndGlyphs" stroke="#f2f2f2" stroke-width="0.3">SPDIF_OUT</text>
</svg>
</body></html>
